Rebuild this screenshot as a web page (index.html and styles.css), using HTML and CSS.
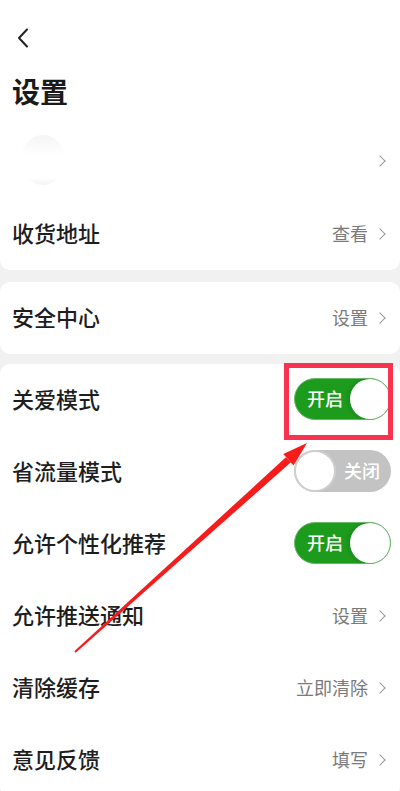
FILE: index.html
```html
<!DOCTYPE html>
<html lang="zh-CN">
<head>
    <meta charset="UTF-8">
    <meta name="viewport" content="width=device-width, initial-scale=1.0">
    <title>设置</title>
    <link rel="stylesheet" href="styles.css">
</head>
<body>
    <div class="page">
        <div class="topbar">
            <svg class="back" width="14" height="20" viewBox="0 0 14 20">
                <polyline points="10,1.5 2,10 10,18.5" fill="none" stroke="#222" stroke-width="2" stroke-linecap="round" stroke-linejoin="round"/>
            </svg>
        </div>
        <h1 class="title">设置</h1>

        <section class="group">
            <div class="row profile">
                <div class="avatar"></div>
                <span class="chevron"></span>
            </div>
            <div class="row">
                <span class="label">收货地址</span>
                <span class="value">查看<span class="chevron"></span></span>
            </div>
        </section>

        <section class="group">
            <div class="row">
                <span class="label">安全中心</span>
                <span class="value">设置<span class="chevron"></span></span>
            </div>
        </section>

        <section class="group">
            <div class="row">
                <span class="label">关爱模式</span>
                <span class="switch on"><span class="switch-text">开启</span><span class="knob"></span></span>
            </div>
            <div class="row">
                <span class="label">省流量模式</span>
                <span class="switch off"><span class="knob"></span><span class="switch-text">关闭</span></span>
            </div>
            <div class="row">
                <span class="label">允许个性化推荐</span>
                <span class="switch on"><span class="switch-text">开启</span><span class="knob"></span></span>
            </div>
            <div class="row">
                <span class="label">允许推送通知</span>
                <span class="value">设置<span class="chevron"></span></span>
            </div>
            <div class="row">
                <span class="label">清除缓存</span>
                <span class="value">立即清除<span class="chevron"></span></span>
            </div>
            <div class="row">
                <span class="label">意见反馈</span>
                <span class="value">填写<span class="chevron"></span></span>
            </div>
        </section>

        <!-- annotation overlay -->
        <div class="mark-box"></div>
        <svg class="mark-arrow" width="400" height="791" viewBox="0 0 400 791">
            <polygon points="75.7,652.7 74.3,651.3 285.9,457.2 290.9,462.3" fill="#f71c1c"/>
            <polygon points="307,443 283.3,454 293.5,465.5" fill="#f71c1c"/>
        </svg>
    </div>
</body>
</html>
```

FILE: styles.css
```css
body {
    margin: 0;
    background: #f1f1f1;
    font-family: "Noto Sans CJK SC", "Noto Sans", sans-serif;
    color: #1e1e1e;
}

.page {
    position: relative;
    width: 400px;
    height: 791px;
    overflow: hidden;
    background: #f1f1f1;
}

.topbar {
    height: 60px;
    background: #fff;
    display: flex;
    align-items: flex-start;
    padding-left: 17px;
}

.back {
    margin-top: 28px;
}

.title {
    margin: 0;
    padding: 11px 12px;
    line-height: 40px;
    font-size: 28px;
    font-weight: 700;
    background: #fff;
    color: #1a1a1a;
}

.group {
    background: #fff;
    border-radius: 0 0 10px 10px;
    margin-bottom: 10px;
}

.group + .group {
    border-radius: 10px;
}

.group:first-of-type {
    margin-bottom: 12px;
}

.row {
    height: 72px;
    display: flex;
    align-items: center;
    justify-content: space-between;
    padding: 0 12px;
}

.row.profile {
    height: 76px;
}

.avatar {
    width: 44px;
    height: 50px;
    margin-left: 9px;
    border-radius: 50%;
    background: linear-gradient(#f4f4f4, #fff 40%, #fff 85%, #f3f3f3);
}

.label {
    margin-top: -4px;
    font-size: 22px;
    font-weight: 500;
    color: #1e1e1e;
}

.value {
    display: flex;
    align-items: center;
    margin-top: -3px;
    font-size: 18px;
    color: #7a7a7a;
}

.chevron {
    display: inline-block;
    width: 7px;
    height: 7px;
    margin: 2px 4px 0 8px;
    border-top: 1.5px solid #999;
    border-right: 1.5px solid #999;
    transform: rotate(45deg);
}

.switch {
    position: relative;
    display: flex;
    align-items: center;
    width: 97px;
    height: 42px;
    margin-right: -3px;
    margin-top: -2px;
    border-radius: 21px;
    box-sizing: border-box;
}

.switch.on {
    background: #1d9b1d;
    border: 1px solid #6ab86a;
    justify-content: space-between;
    padding-left: 12px;
}

.switch.off {
    background: #c3c3c3;
    justify-content: space-between;
    padding-right: 11px;
}

.switch-text {
    margin-top: -2px;
    font-size: 18px;
    font-weight: 500;
    color: #fff;
}

.knob {
    width: 40px;
    height: 40px;
    border-radius: 50%;
    background: #fff;
    box-sizing: border-box;
}

.switch.on .knob {
    box-shadow: -2px 0 4px rgba(0, 0, 0, 0.12);
}

.switch.off .knob {
    width: 42px;
    height: 42px;
    border: 2px solid #cfcfcf;
}

.mark-box {
    position: absolute;
    left: 284px;
    top: 363px;
    width: 109px;
    height: 77px;
    border: 5px solid #f8334f;
    box-sizing: border-box;
}

.mark-arrow {
    position: absolute;
    left: 0;
    top: 0;
}
```
